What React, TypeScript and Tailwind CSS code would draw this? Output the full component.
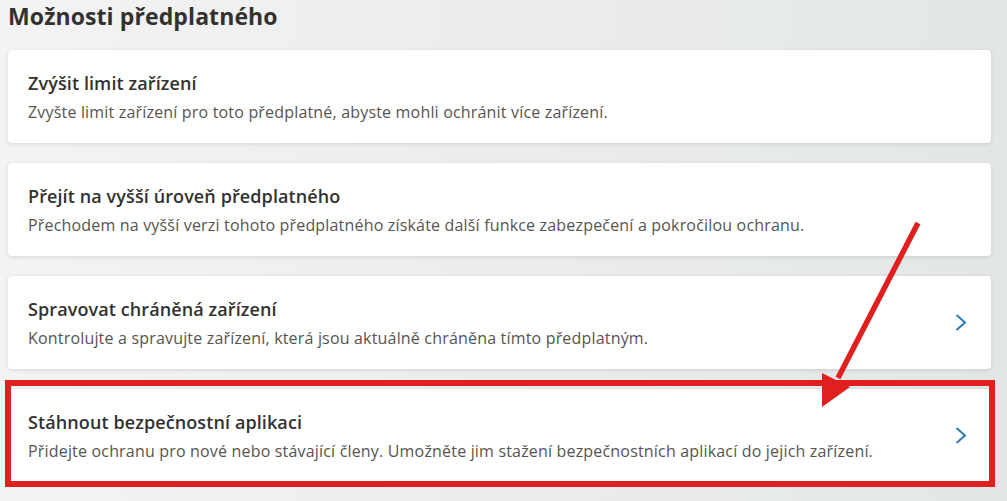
const options = [
  {
    title: "Zvýšit limit zařízení",
    text: "Zvyšte limit zařízení pro toto předplatné, abyste mohli ochránit více zařízení.",
    link: false,
  },
  {
    title: "Přejít na vyšší úroveň předplatného",
    text: "Přechodem na vyšší verzi tohoto předplatného získáte další funkce zabezpečení a pokročilou ochranu.",
    link: false,
  },
  {
    title: "Spravovat chráněná zařízení",
    text: "Kontrolujte a spravujte zařízení, která jsou aktuálně chráněna tímto předplatným.",
    link: true,
  },
  {
    title: "Stáhnout bezpečnostní aplikaci",
    text: "Přidejte ochranu pro nové nebo stávající členy. Umožněte jim stažení bezpečnostních aplikací do jejich zařízení.",
    link: true,
  },
];

function Chevron() {
  return (
    <svg width="12" height="17" viewBox="0 0 12 17" fill="none" className="shrink-0">
      <polyline points="1.5,1 10,8.5 1.5,16" stroke="#2b7cb3" strokeWidth="2" />
    </svg>
  );
}

export default function App() {
  return (
    <div
      className="relative w-[1007px] h-[501px] overflow-hidden bg-gradient-to-r from-[#f3f3f3] to-[#e3e6e7] px-2 text-[#323130]"
      style={{ fontFamily: '"Open Sans", "Noto Sans", sans-serif' }}
    >
      <h1 className="text-[23px] leading-[32px] font-bold tracking-[0.1px] text-[#323130]">Možnosti předplatného</h1>

      <div className="mt-[18px] flex w-[983px] flex-col gap-[20px]">
        {options.map((o) => (
          <div
            key={o.title}
            className="flex h-[93px] items-center rounded-[4px] bg-white pl-5 pr-[24px] shadow-[0_1px_4px_rgba(0,0,0,0.12)]"
          >
            <div className="flex-1">
              <div className="text-[18px] leading-[24px] font-semibold tracking-[0.1px] text-[#323130]">{o.title}</div>
              <div className="mt-[6px] text-[16px] leading-[22px] tracking-[0.18px] text-[#57544f]">{o.text}</div>
            </div>
            {o.link && <Chevron />}
          </div>
        ))}
      </div>

      {/* red highlight around the last card */}
      <div className="pointer-events-none absolute left-[5px] top-[380px] h-[107px] w-[990px] border-[6px] border-[#e0201f]" />

      <svg className="pointer-events-none absolute left-0 top-0" width="1007" height="501">
        <line x1="918" y1="223" x2="838" y2="378" stroke="#e0201f" strokeWidth="5.5" />
        <polygon points="822,373 850,387 822,407" fill="#e0201f" />
      </svg>
    </div>
  );
}
